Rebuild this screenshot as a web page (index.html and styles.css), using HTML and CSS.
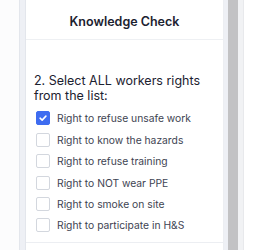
FILE: index.html
```html
<!DOCTYPE html>
<html lang="en">
<head>
  <meta charset="UTF-8" />
  <meta name="viewport" content="width=device-width, initial-scale=1.0" />
  <title>Knowledge Check</title>
  <link rel="stylesheet" href="styles.css">
</head>
<body>
  <div class="page">
    <div class="gutter"></div>
    <div class="rail"></div>
    <div class="card">
      <div class="card-head">Knowledge Check</div>
      <div class="card-body">
        <p class="question">2. Select ALL workers rights from the list:</p>
        <ul class="options">
          <li class="option"><span class="box checked"><svg viewBox="0 0 14 14" width="14" height="14"><path d="M3.6 7.2 L6 9.5 L10.4 4.8" fill="none" stroke="#fff" stroke-width="1.8" stroke-linecap="round" stroke-linejoin="round"/></svg></span>Right to refuse unsafe work</li>
          <li class="option"><span class="box"></span>Right to know the hazards</li>
          <li class="option"><span class="box"></span>Right to refuse training</li>
          <li class="option"><span class="box"></span>Right to NOT wear PPE</li>
          <li class="option"><span class="box"></span>Right to smoke on site</li>
          <li class="option"><span class="box"></span>Right to participate in H&amp;S</li>
        </ul>
      </div>
      <div class="card-foot"></div>
    </div>
    <div class="rail right"></div>
    <div class="scrollbar"></div>
    <div class="rail-end"></div>
  </div>
</body>
</html>
```

FILE: styles.css
```css
body {
  margin: 0;
  background: #fff;
  font-family: Inter, 'Liberation Sans', sans-serif;
  color: #1f2430;
}
.page {
  display: flex;
  height: 250px;
  overflow: hidden;
}
.gutter {
  width: 19px;
  background: #fcfcfd;
  border-right: 1px solid #e3e6ec;
}
.rail {
  width: 5px;
  background: #eef0f5;
  border-right: 1px solid #e3e6ec;
}
.rail.right {
  border-right: none;
  border-left: 1px solid #eceef2;
  width: 4px;
}
.card {
  width: 197px;
  background: #fff;
  display: flex;
  flex-direction: column;
}
.card-head {
  height: 39px;
  border-bottom: 1px solid #eef0f3;
  text-align: center;
  font-size: 12.5px;
  font-weight: 600;
  line-height: 43px;
  color: #1c2230;
}
.card-body {
  flex: 1;
  padding: 34px 8px 0 8px;
}
.question {
  margin: 0 0 4.75px;
  font-size: 12.5px;
  line-height: 14.5px;
  color: #1c2230;
}
.options {
  list-style: none;
  margin: 0;
  padding: 0;
}
.option {
  display: flex;
  align-items: center;
  gap: 7px;
  height: 21.4px;
  padding-left: 2px;
  font-size: 10.3px;
  color: #3e4452;
}
.box {
  width: 12px;
  height: 12px;
  border: 1px solid #d3d7de;
  border-radius: 2px;
  background: #fff;
  display: flex;
  align-items: center;
  justify-content: center;
  flex-shrink: 0;
}
.box.checked {
  background: #3e6cf0;
  border-color: #3e6cf0;
}
.card-foot {
  height: 7px;
  border-top: 1px solid #eceef2;
}
.scrollbar {
  width: 10px;
  background: #c2c2c4;
}
.rail-end {
  width: 5px;
  background: #f1f2f4;
  border-right: 1px solid #e8e9ec;
}
```
